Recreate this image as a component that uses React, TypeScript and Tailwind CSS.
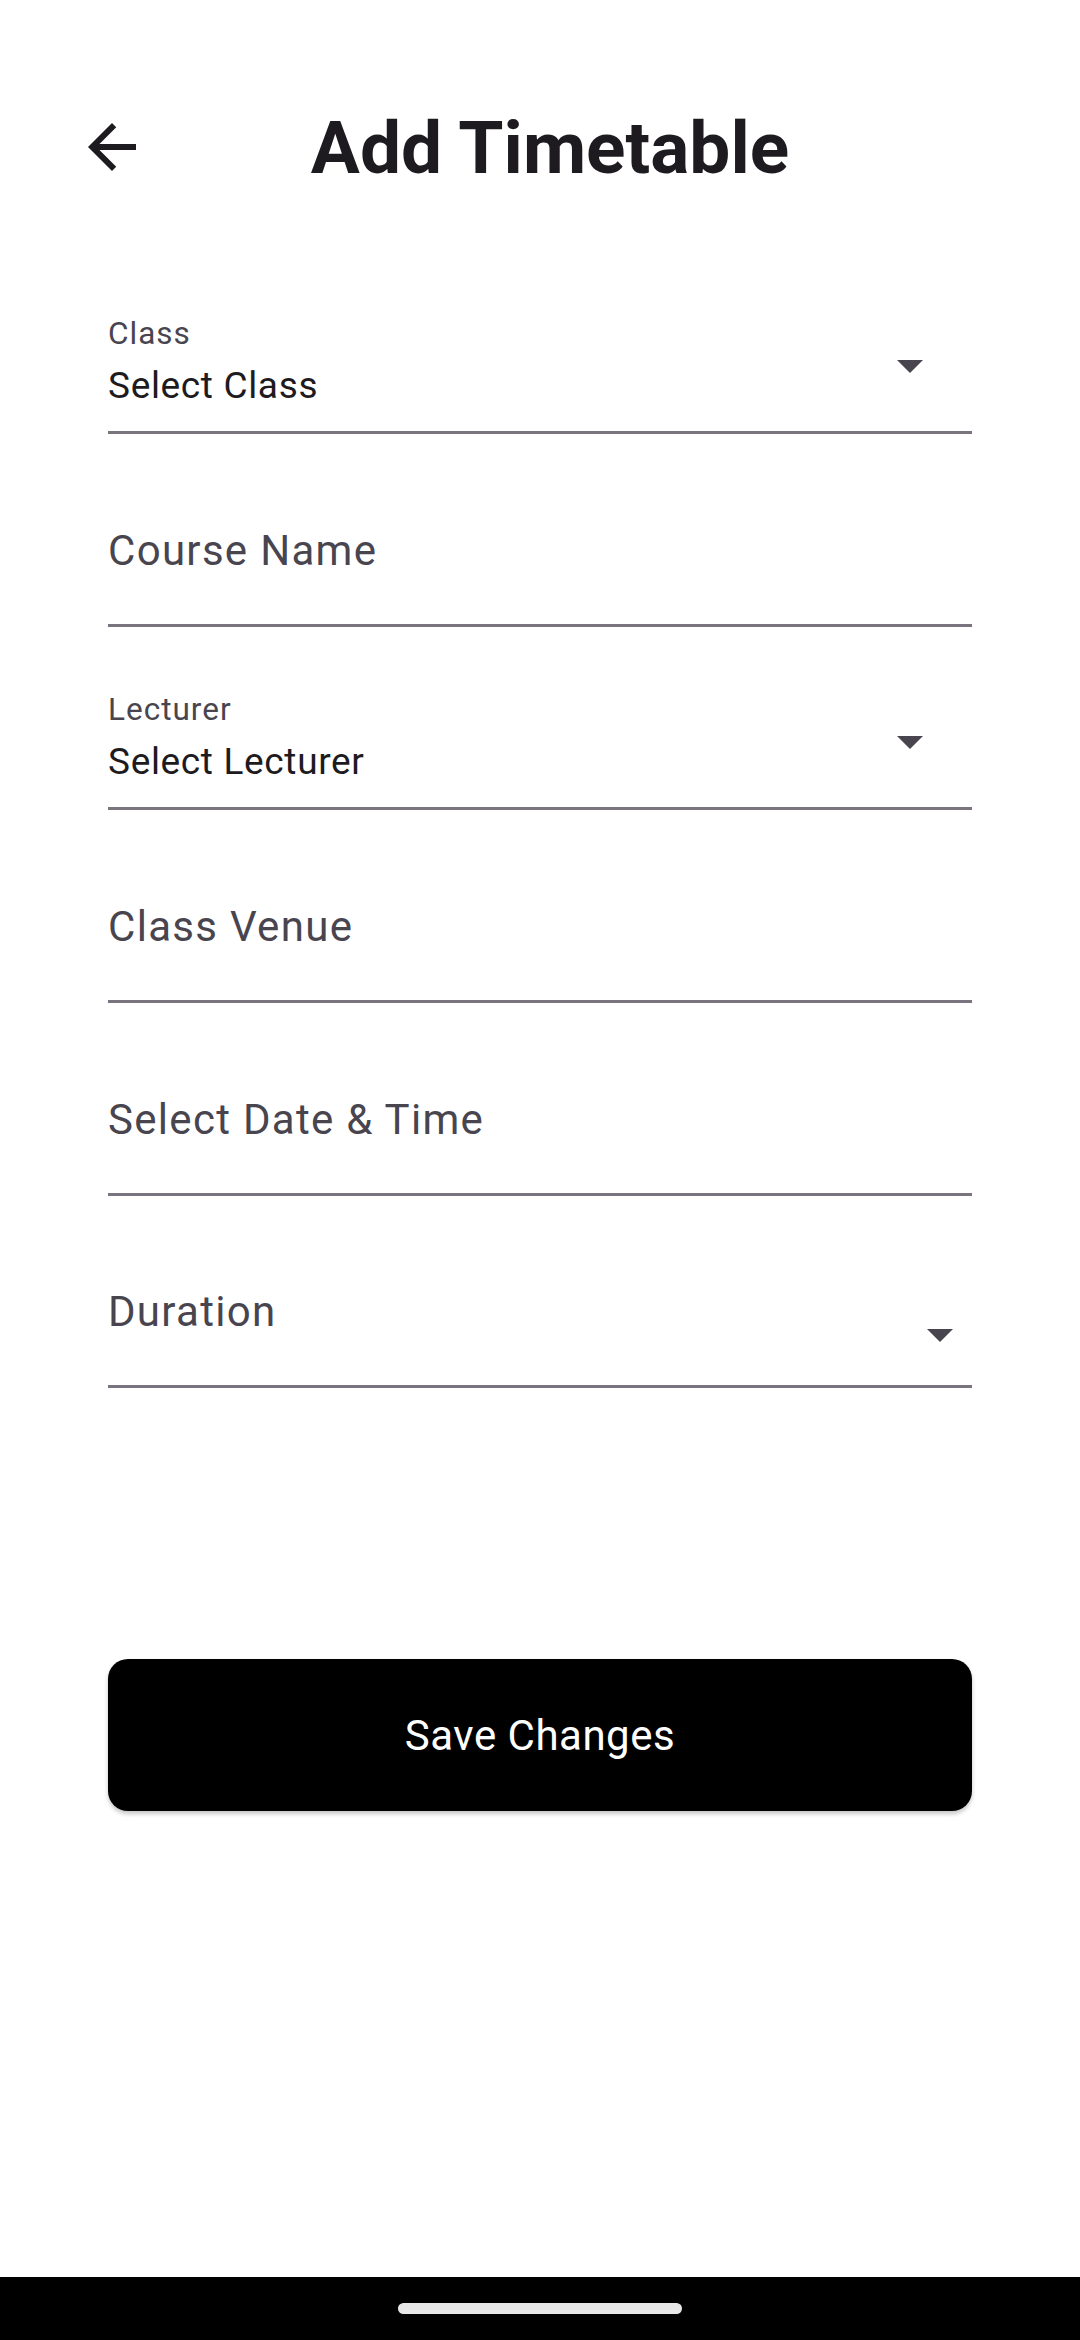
import React from "react";

const ink = "text-[#1D1B20]";

function BackArrow() {
  return (
    <svg width="72" height="72" viewBox="0 0 24 24" className="shrink-0">
      <path
        d="M20 11H7.83l5.59-5.59L12 4l-8 8 8 8 1.41-1.41L7.83 13H20v-2z"
        fill="#1D1B20"
      />
    </svg>
  );
}

function Caret() {
  return (
    <svg width="26" height="13" viewBox="0 0 26 13">
      <path d="M0 0h26L13 13z" fill="#49454F" />
    </svg>
  );
}

function SelectField({ label, value, className = "" }: { label: string; value: string; className?: string }) {
  return (
    <div className={`relative border-b-[3px] border-[#79747E] pb-[27px] ${className}`}>
      <div className="text-[31.5px] leading-[32px] tracking-[1px] text-[#49454F]">{label}</div>
      <div className={`mt-[17px] text-[37px] leading-[37px] tracking-[0.66px] ${ink}`}>{value}</div>
      <div className="absolute right-[49px] top-[42px] flex">
        <Caret />
      </div>
    </div>
  );
}

function InputField({ hint, caret = false, className = "" }: { hint: string; caret?: boolean; className?: string }) {
  return (
    <div className={`relative border-b-[3px] border-[#79747E] pb-[52px] ${className}`}>
      <div className="text-[42px] leading-[42px] tracking-[1.3px] text-[#49454F]">{hint}</div>
      {caret && (
        <div className="absolute right-[19px] top-[38px] flex">
          <Caret />
        </div>
      )}
    </div>
  );
}

export default function App() {
  return (
    <div className="flex h-[2340px] w-[1080px] flex-col bg-white font-['Roboto',sans-serif]">
      <header className="mt-[111px] flex h-[74px] items-start pl-[76px] pr-[128px]">
        <BackArrow />
        <h1 className={`flex-1 text-center text-[73px] font-bold leading-[74px] ${ink}`}>Add Timetable</h1>
      </header>

      <main className="mt-[133px] flex flex-col px-[108px]">
        <SelectField label="Class" value="Select Class" />
        <InputField hint="Course Name" className="mt-[96px]" />
        <SelectField label="Lecturer" value="Select Lecturer" className="mt-[67px]" />
        <InputField hint="Class Venue" className="mt-[96px]" />
        <InputField hint="Select Date & Time" className="mt-[96px]" />
        <InputField hint="Duration" caret className="mt-[95px]" />

        <button className="mt-[271px] flex h-[152px] w-full items-center justify-center rounded-[20px] bg-black text-[42px] tracking-[0.5px] text-white shadow-[0_3px_4px_rgba(0,0,0,0.22)]">
          Save Changes
        </button>
      </main>

      <div className="mt-auto flex h-[63px] justify-center bg-black pt-[26px]">
        <div className="h-[11px] w-[284px] rounded-full bg-[#E8E8E8]" />
      </div>
    </div>
  );
}
